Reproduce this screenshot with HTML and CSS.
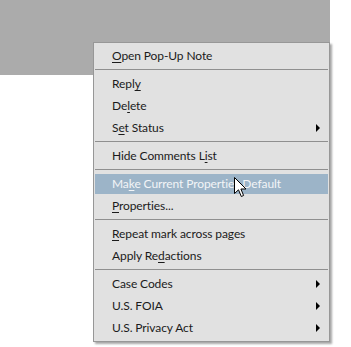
FILE: index.html
```html
<!DOCTYPE html>
<html lang="en">
<head>
    <meta charset="UTF-8">
    <title>Comment context menu</title>
    <link rel="stylesheet" href="styles.css">
</head>
<body>
    <div class="backdrop"></div>

    <ul class="context-menu">
        <li class="item"><u>O</u>pen Pop-Up Note</li>
        <li class="sep"></li>
        <li class="item">Repl<u>y</u></li>
        <li class="item">De<u>l</u>ete</li>
        <li class="item sub">S<u>e</u>t Status</li>
        <li class="sep"></li>
        <li class="item">Hide Comments L<u>i</u>st</li>
        <li class="sep"></li>
        <li class="item is-hover">Ma<u>k</u>e Current Properties Default</li>
        <li class="item"><u>P</u>roperties...</li>
        <li class="sep"></li>
        <li class="item"><u>R</u>epeat mark across pages</li>
        <li class="item">Apply Re<u>d</u>actions</li>
        <li class="sep"></li>
        <li class="item sub">Case Codes</li>
        <li class="item sub">U.S. FOIA</li>
        <li class="item sub">U.S. Privacy Act</li>
    </ul>

    <svg class="cursor" width="13" height="21" viewBox="0 0 13 21">
        <path d="M0.5 0.5 L0.5 16.5 L4.5 12.8 L7.3 19.5 L9.6 18.5 L6.9 12 L12 12 Z" fill="#fff" stroke="#000" stroke-width="1"/>
    </svg>
</body>
</html>
```

FILE: styles.css
```css
:root {
    --gris-fondo: #ababab;
    --menu-fondo: #e1e1e1;
    --menu-borde: #979797;
    --texto: #1b1b1b;
    --resaltado: #9cb4c8;
}
* { box-sizing: border-box; margin: 0; padding: 0; }
body {
    background: #fff;
    font-family: Lato, 'Noto Sans', sans-serif;
    font-size: 12px;
    letter-spacing: -0.1px;
    color: var(--texto);
    position: relative;
    width: 351px; height: 347px; overflow: hidden;
}
.backdrop { width: 330px; height: 75px; background: var(--gris-fondo); }

.context-menu {
    position: absolute; left: 93px; top: 42px; width: 237px;
    list-style: none; background: var(--menu-fondo);
    border: 1px solid var(--menu-borde);
    padding: 2px 1px;
    box-shadow: 2px 2px 2px rgba(0, 0, 0, 0.35);
}
.item {
    position: relative;
    height: 22px; line-height: 20px;
    padding-left: 17px;
    border-top: 1px solid transparent; border-bottom: 1px solid transparent;
    background-clip: padding-box;
    white-space: nowrap;
}
.item u { text-decoration-thickness: 1px; text-underline-offset: 2px; }
.item.is-hover { background-color: var(--resaltado); color: #f3f5f7; }
.item.sub::after {
    content: ""; position: absolute; right: 8px; top: 6px;
    border-left: 4px solid #000; border-top: 4px solid transparent; border-bottom: 4px solid transparent;
}
.sep { height: 6px; padding-top: 2px; }
.sep::before { content: ""; display: block; height: 1px; background: #8f8f8f; }

.cursor { position: absolute; left: 234px; top: 177px; }
```
